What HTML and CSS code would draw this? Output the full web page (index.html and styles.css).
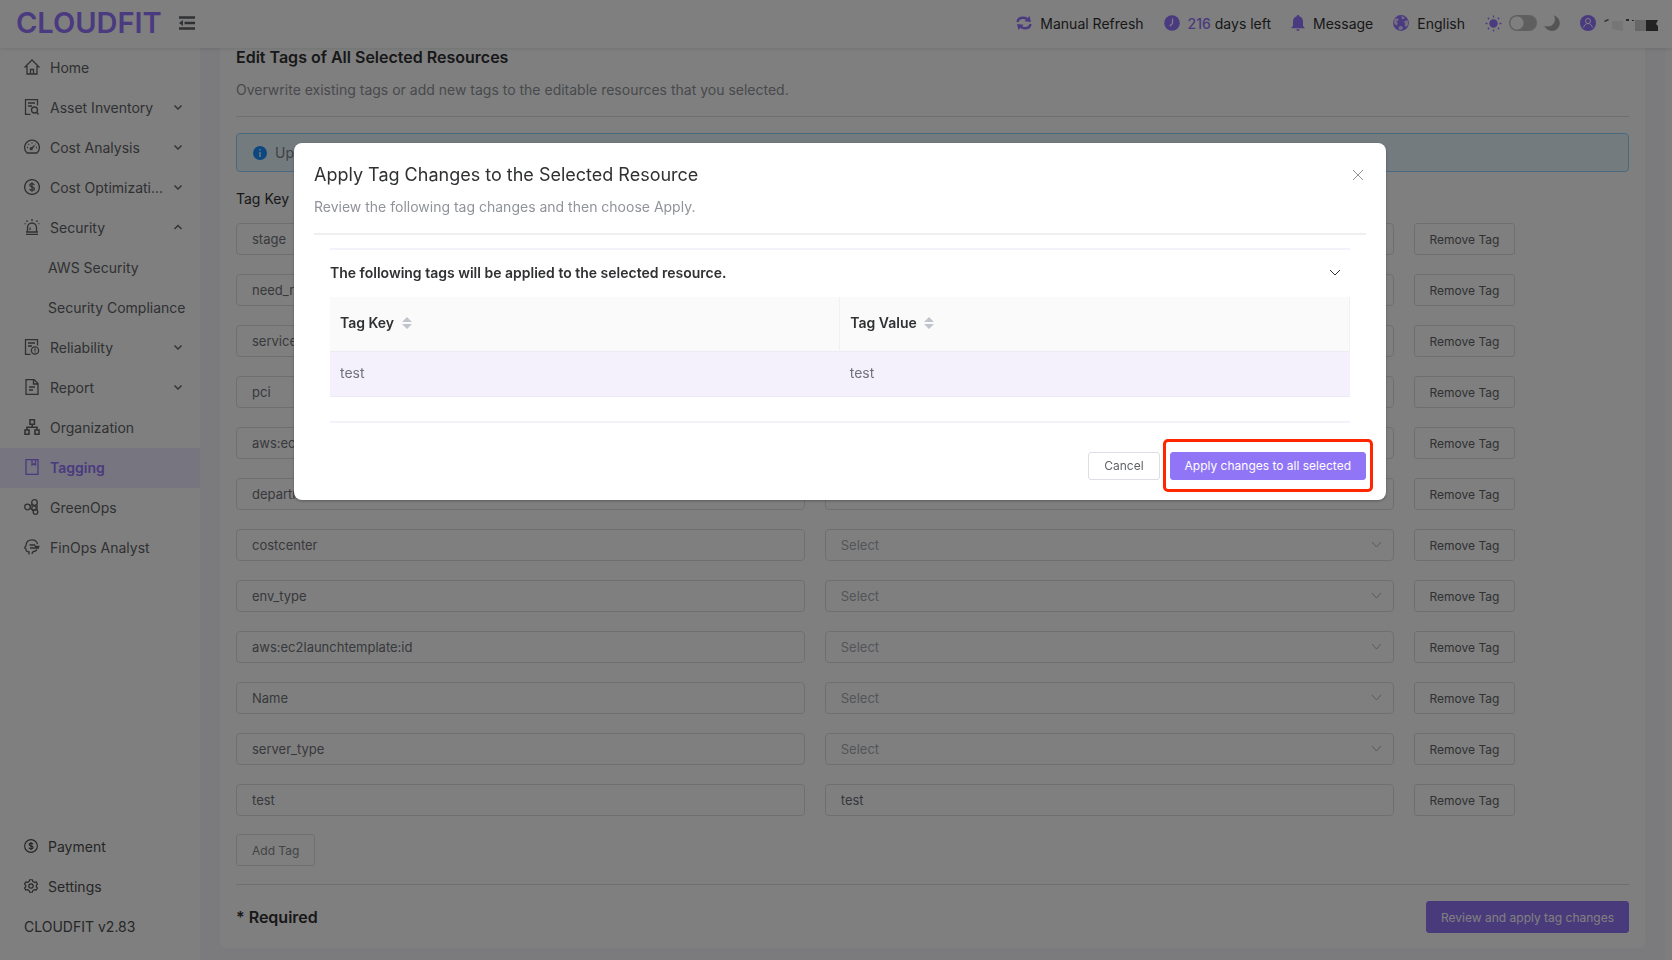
FILE: index.html
```html
<!DOCTYPE html>
<html lang="en">
<head>
    <meta charset="UTF-8">
    <title>CLOUDFIT - Tagging</title>
    <meta name="viewport" content="width=device-width, initial-scale=1.0">
    <link rel="stylesheet" href="styles.css">
</head>
<body>
    <header class="topbar">
        <a class="logo" href="#">CLOUDFIT</a>
        <button class="fold" aria-label="Collapse menu">
            <svg width="16" height="14" viewBox="0 0 16 14"><path d="M0 1.500h16M5.500 7h10.500M0 12.500h16" stroke="currentColor" stroke-width="2.400" fill="none"/><path d="M0 7l4-3v6z" fill="currentColor"/></svg>
        </button>
        <nav class="tools">
            <a href="#" class="tool">
                <svg width="16" height="16" viewBox="0 0 16 16"><path d="M1.500 7C2 4 4.500 2.800 7 2.800c1.500 0 3 .5 4 1.200M14.500 9c-.5 3-3 4.200-5.500 4.200-1.500 0-3-.5-4-1.200" fill="none" stroke="currentColor" stroke-width="2.400"/><path d="M13.500 1l1.500 6-6.500-.8zM2.500 15L1 9l6.500.8z" fill="currentColor"/></svg>
                Manual Refresh</a>
            <a href="#" class="tool">
                <svg width="16" height="16" viewBox="0 0 16 16"><circle cx="8" cy="8" r="7.800" fill="currentColor"/><path d="M8.500 3.500v5L5.800 11" fill="none" stroke="#fff" stroke-width="1.300"/></svg>
                <span><b class="days">216</b> days left</span></a>
            <a href="#" class="tool">
                <svg width="14" height="16" viewBox="0 0 14 16"><path d="M7 0c.8 0 1.200.5 1.200 1.200C10.500 1.800 12 3.700 12 6.200V11l1.600 1.600v.7H.4v-.7L2 11V6.200c0-2.500 1.500-4.400 3.800-5C5.800.5 6.200 0 7 0zM5.300 14.300h3.400C8.500 15.400 7.900 16 7 16s-1.500-.6-1.700-1.700z" fill="currentColor"/></svg>
                Message</a>
            <a href="#" class="tool">
                <svg width="16" height="16" viewBox="0 0 16 16"><circle cx="8" cy="8" r="7.900" fill="currentColor"/><path d="M1.500 3.800l3.200-.6 1.200 1.900-2.300 1.500 1.200 1.700-1 2.500-2.700-2.200zM8.500 1l3.300 1.200-1 1.800-2 .2zM11 6l3.800-.7.3 4.400-1.800 2.300-1.800-1.300.5-2zM5.500 12l2-1.200 2.700 1.500-1.500 2.700-3-.5z" fill="#fff" opacity=".75"/></svg>
                English</a>
            <div class="theme">
                <svg class="sun" width="17" height="17" viewBox="0 0 17 17"><circle cx="8.500" cy="8.500" r="4.200" fill="currentColor"/><path d="M8.500.5v2M8.500 14.500v2M.5 8.500h2M14.500 8.500h2M2.800 2.800l1.400 1.400M12.800 12.800l1.400 1.400M2.800 14.200l1.400-1.400M12.800 4.200l1.400-1.400" stroke="currentColor" stroke-width="1.300"/></svg>
                <input type="checkbox" class="switch" aria-label="Dark mode">
                <svg class="moon" width="16" height="16" viewBox="0 0 16 16"><path d="M10 .3C14 2 16 5 15.800 8.500 15.500 12.800 12 16 8 16 4.500 16 1.600 14 .3 10.800 3.500 12 7 11.400 9 9.200 11.300 6.800 11.500 3.500 10 .3z" fill="currentColor"/></svg>
            </div>
            <a href="#" class="tool" aria-label="Account">
                <svg width="16" height="16" viewBox="0 0 16 16"><circle cx="8" cy="8" r="8" fill="currentColor"/><circle cx="8" cy="6" r="2.500" fill="none" stroke="#fff"/><path d="M3.600 12.500c.6-2.300 2.300-4 4.400-4s3.800 1.700 4.400 4" fill="none" stroke="#fff"/></svg>
                <svg width="54" height="16" viewBox="0 0 54 16"><path d="M0 6l4-2 1 1-4 2zM22 4h3v2h-3zM28 5h2v2h-2zM31 5h2v2h-2z" fill="#555"/><path d="M8 6h11v10L8 14z" fill="#ececec"/><path d="M19 6h12v10H19z" fill="#fff"/><path d="M31 5h11v11H31z" fill="#cfcfcf"/><path d="M42 5h12l-2 4 2 2v5H42z" fill="#444"/></svg>
            </a>
        </nav>
    </header>

    <div class="layout">
        <aside class="sidebar">
            <nav class="menu">
                <a href="#"><svg viewBox="0 0 16 16"><path d="M.5 8.500 8 1l7.500 7.500M3 7v8h10V7M6.500 15v-4.500h3V15"/></svg><span>Home</span></a>
                <a href="#"><svg viewBox="0 0 16 16"><path d="M13.500 6.500v-6h-12v15h5M4 4h7M4 7h4"/><circle cx="10.500" cy="11" r="3"/><path d="M12.500 13l2 2.500"/></svg><span>Asset Inventory</span><svg class="arrow" viewBox="0 0 8 8"><path d="M.5 2.500 4 6l3.500-3.500"/></svg></a>
                <a href="#"><svg viewBox="0 0 16 16"><path d="M3 14C1.400 12.800.6 10.800.6 8.500a7.400 7.400 0 0 1 14.800 0c0 2.300-.8 4.300-2.400 5.500zM7.500 9.500l3-3M3 8.500h1M12 8.500h1M8 3.500v1M4.500 5l.7.700M11.500 5l-.3.300"/><circle cx="7.200" cy="9.700" r="1"/></svg><span>Cost Analysis</span><svg class="arrow" viewBox="0 0 8 8"><path d="M.5 2.500 4 6l3.500-3.500"/></svg></a>
                <a href="#"><svg viewBox="0 0 16 16"><circle cx="8" cy="8" r="7.400"/><path d="M10.300 6C10 5 9.200 4.700 8 4.700S5.800 5.200 5.800 6.300C5.800 8.500 10.400 7.300 10.400 9.700c0 1-.9 1.600-2.400 1.600S5.800 10.700 5.600 9.800M8 3.300v9.400"/></svg><span>Cost Optimizati...</span><svg class="arrow" viewBox="0 0 8 8"><path d="M.5 2.500 4 6l3.500-3.500"/></svg></a>
                <a href="#"><svg viewBox="0 0 16 16"><path d="M2 15.500h12M3.500 13V8.500a4.500 4.500 0 0 1 9 0V13zM6 11V8.500M8 0v2M2.500 1.500l1 1.300M13.500 1.500l-1 1.300M.5 4.500l1 .5M15.500 4.500l-1 .5M2 13h12"/></svg><span>Security</span><svg class="arrow" viewBox="0 0 8 8"><path d="M.5 6 4 2.500 7.500 6"/></svg></a>
                <a href="#" class="sub">AWS Security</a>
                <a href="#" class="sub">Security Compliance</a>
                <a href="#"><svg viewBox="0 0 16 16"><path d="M13.500 6.500v-6h-12v15h5M4 4h7M4 7h4"/><circle cx="11" cy="11.500" r="3.600"/><path d="M11 9.500v2.300M11 12.600v1"/></svg><span>Reliability</span><svg class="arrow" viewBox="0 0 8 8"><path d="M.5 2.500 4 6l3.500-3.500"/></svg></a>
                <a href="#"><svg viewBox="0 0 16 16"><path d="M2 .6h8l4 4v10.800H2zM9.500.6V5H14M5 8h6M5 11h4"/></svg><span>Report</span><svg class="arrow" viewBox="0 0 8 8"><path d="M.5 2.500 4 6l3.500-3.500"/></svg></a>
                <a href="#"><svg class="bold" viewBox="0 0 16 16"><path d="M6 .8h4.400v4.400H6zM1 11h4v4.200H1zM11 11h4v4.200h-4zM8.200 5.200v3M3 11V8.200h10V11"/></svg><span>Organization</span></a>
                <a href="#" class="active"><svg viewBox="0 0 16 16"><path d="M2 .6h12v14.800H2zM8 .6V6l1.800-1.300L11.500 6V.6"/></svg><span>Tagging</span></a>
                <a href="#"><svg viewBox="0 0 16 16"><circle cx="3.500" cy="8" r="2.800"/><circle cx="10.500" cy="3.500" r="2.800"/><circle cx="10" cy="9" r="2.200"/><circle cx="11.500" cy="13" r="2.300"/><path d="M6 7l2.500-1.700M6 9l3.500 3M13 5.500v5.500"/></svg><span>GreenOps</span></a>
                <a href="#"><svg viewBox="0 0 16 16"><path d="M5 15.500V12.800C3 12.800 2 12.500 2 10L.6 8.700 2 6.500C2.200 3 4.500.8 8 .8c3 0 5 1.800 5.500 4.200M5.500 6h5l1 1.500h4M6 9h9M8 15c.3-2.500 1.500-3 3.500-3l1.500-1.500"/></svg><span>FinOps Analyst</span></a>
            </nav>
            <nav class="menu menu-bottom">
                <a href="#"><svg viewBox="0 0 16 16"><circle cx="8" cy="8" r="7.300"/><path d="M10.300 6C10 5 9.200 4.700 8 4.700S5.800 5.200 5.800 6.300C5.800 8.500 10.400 7.300 10.400 9.700c0 1-.9 1.600-2.400 1.600S5.800 10.700 5.600 9.800M8 3.300v9.400"/></svg><span>Payment</span></a>
                <a href="#"><svg viewBox="0 0 16 16"><path d="M6.500.8h3l.6 2 1.700 1 2.100-.5 1.500 2.500L14 7.200v1.600l1.400 1.400-1.500 2.500-2.100-.5-1.700 1-.6 2h-3l-.6-2-1.700-1-2.100.5L.6 10.200 2 8.800V7.200L.6 5.800l1.500-2.500 2.100.5 1.700-1z"/><circle cx="8" cy="8" r="2.500"/></svg><span>Settings</span></a>
                <p class="version">CLOUDFIT v2.83</p>
            </nav>
        </aside>

        <main class="content">
            <section class="card">
                <h2>Edit Tags of All Selected Resources</h2>
                <p class="desc">Overwrite existing tags or add new tags to the editable resources that you selected.</p>
                <hr>
                <div class="alert">
                    <svg width="14" height="14" viewBox="0 0 14 14"><circle cx="7" cy="7" r="7" fill="#1890ff"/><path d="M7 3v1.500M7 6v5" stroke="#e6f7ff" stroke-width="1.400"/></svg>
                    Up to 50 tags can be added to each resource.
                </div>
                <div class="row labels"><span>Tag Key</span><span>Tag Value</span></div>
                <div class="rows" id="tagRows"></div>
                <button class="btn add">Add Tag</button>
                <hr>
                <div class="card-footer">
                    <strong>* Required</strong>
                    <button class="btn primary">Review and apply tag changes</button>
                </div>
            </section>
        </main>
    </div>

    <div class="overlay">
        <div class="modal" role="dialog" aria-labelledby="modalTitle">
            <div class="modal-head">
                <h3 id="modalTitle">Apply Tag Changes to the Selected Resource</h3>
                <button class="close" aria-label="Close"><svg width="10" height="10" viewBox="0 0 10 10"><path d="M0 0l10 10M10 0 0 10" stroke="currentColor" fill="none"/></svg></button>
            </div>
            <p class="modal-desc">Review the following tag changes and then choose Apply.</p>
            <div class="collapse">
                <button class="collapse-head">The following tags will be applied to the selected resource.
                    <svg width="12" height="8" viewBox="0 0 12 8"><path d="M1 1l5 5 5-5" stroke="currentColor" fill="none"/></svg></button>
                <table>
                    <thead>
                        <tr>
                            <th>Tag Key <svg width="10" height="12" viewBox="0 0 10 12"><path d="M0 5l5-5 5 5zM0 7l5 5 5-5z" fill="#c0c4cc"/></svg></th>
                            <th>Tag Value <svg width="10" height="12" viewBox="0 0 10 12"><path d="M0 5l5-5 5 5zM0 7l5 5 5-5z" fill="#c0c4cc"/></svg></th>
                        </tr>
                    </thead>
                    <tbody>
                        <tr><td>test</td><td>test</td></tr>
                    </tbody>
                </table>
            </div>
            <div class="modal-footer">
                <button class="btn small">Cancel</button>
                <button class="btn small primary marked">Apply changes to all selected</button>
            </div>
        </div>
    </div>

    <script>
        const tags = [
            ['stage'], ['need_ri'], ['service'], ['pci'], ['aws:ec2:fleet-id'], ['department'],
            ['costcenter'], ['env_type'], ['aws:ec2launchtemplate:id'], ['Name'], ['server_type'],
            ['test', 'test']
        ];

        document.getElementById('tagRows').innerHTML = tags.map(([key, value]) => `
            <div class="row">
                <input type="text" value="${key}" aria-label="Tag key">
                ${value
                    ? `<input type="text" value="${value}" aria-label="Tag value">`
                    : `<div class="select">
                        <select aria-label="Value of ${key}"><option>Select</option></select>
                        <svg width="11" height="8" viewBox="0 0 11 8"><path d="M1 1l4.500 5L10 1" stroke="currentColor" fill="none"/></svg>
                    </div>`}
                <button class="btn remove">Remove Tag</button>
            </div>`).join('');
    </script>
</body>
</html>
```
FILE: styles.css
```css
* {
    box-sizing: border-box;
}

body {
    margin: 0;
    min-height: 100vh;
    display: flex;
    flex-direction: column;
    background-color: #fff;
    color: #303133;
    font-family: Inter, "Noto Sans", sans-serif;
    font-size: 14px;
}

a {
    color: inherit;
    text-decoration: none;
}

button, input, select {
    font-family: inherit;
}

button {
    cursor: pointer;
}

h2, h3, p {
    margin: 0;
}

/* header */
.topbar {
    display: flex;
    align-items: center;
    height: 48px;
    padding: 0 14px 2px 16px;
    background-color: #fff;
    box-shadow: 0 1px 4px rgba(0, 21, 41, 0.12);
    position: relative;
}

.logo {
    color: #9474ff;
    font-size: 29px;
    font-weight: 600;
    line-height: 46px;
}

.fold {
    margin-left: 17px;
    padding: 0;
    border: none;
    background: none;
    color: #606266;
    display: flex;
}

.tools {
    margin-left: auto;
    display: flex;
    align-items: center;
    gap: 20px;
}

.tool {
    display: flex;
    align-items: center;
    gap: 8px;
    white-space: nowrap;
}

.tool svg:first-child, .sun, .days {
    color: #9474ff;
}

.days {
    font-weight: 500;
}

.theme {
    display: flex;
    align-items: center;
    gap: 7px;
}

.moon {
    color: #a8a8ac;
}

.switch {
    appearance: none;
    margin: 0;
    width: 28px;
    height: 16px;
    border-radius: 8px;
    background: radial-gradient(circle at 8px 8px, #fff 6px, #bfbfbf 7px);
}

/* sidebar */
.layout {
    flex: 1;
    display: flex;
    background-color: #f6f6fb;
}

.sidebar {
    width: 200px;
    flex-shrink: 0;
    display: flex;
    flex-direction: column;
    background-color: #fff;
}

.menu a, .version {
    display: flex;
    align-items: center;
    gap: 10px;
    height: 40px;
    padding: 0 18px 2px 24px;
    color: #606266;
    white-space: nowrap;
}

.menu svg {
    width: 16px;
    height: 16px;
    fill: none;
    stroke: currentColor;
    stroke-width: 1.3;
}

.menu .bold {
    stroke-width: 1.6;
}

.menu .arrow {
    width: 8px;
    height: 8px;
    margin-left: auto;
    stroke-width: 1.4;
}

.menu .sub {
    padding-left: 48px;
}

.menu .active {
    background-color: #eeeaff;
    color: #9474ff;
    font-weight: 600;
}

.menu-bottom {
    margin-top: auto;
    padding-bottom: 13px;
}

.menu-bottom a, .version {
    color: #4c4d50;
}

.menu-bottom svg {
    width: 14px;
    height: 14px;
}

/* content */
.content {
    flex: 1;
    padding: 0 7px 10px 20px;
    background: linear-gradient(#fcfcfc, #fcfcfc) right / 7px 100% no-repeat;
}

.card {
    margin-right: 20px;
    padding: 0 16px 15px;
    background-color: #fff;
    border-radius: 0 0 6px 6px;
}

.card h2 {
    font-size: 16px;
    font-weight: 600;
    line-height: 18px;
}

.desc {
    margin-top: 14px;
    line-height: 20px;
    color: #909399;
}

hr {
    margin: 16px 0;
    border: none;
    border-top: 1px solid #dcdfe6;
}

.alert {
    display: flex;
    align-items: center;
    gap: 8px;
    height: 39px;
    padding: 0 16px;
    border: 1px solid #91d5ff;
    border-radius: 4px;
    background-color: #e6f7ff;
    color: #808288;
}

.row {
    display: grid;
    grid-template-columns: repeat(24, 1fr);
    column-gap: 20px;
}

.row > * {
    grid-column: span 10;
}

.labels {
    margin: 17px 0 14px;
    line-height: 20px;
}

.rows {
    display: grid;
    row-gap: 19px;
}

.row input, .row select {
    width: 100%;
    height: 32px;
    padding: 0 15px;
    border: 1px solid #dcdfe6;
    border-radius: 4px;
    background-color: #fff;
    color: #707278;
    font-size: 13px;
}

.row select {
    appearance: none;
    color: #a8abb2;
}

.select {
    position: relative;
}

.select svg {
    position: absolute;
    right: 12px;
    top: 12px;
    color: #b0b3ba;
}

.btn {
    height: 32px;
    padding: 0 15px;
    border: 1px solid #dcdfe6;
    border-radius: 3px;
    background-color: #fff;
    color: #606266;
    font-size: 12px;
    white-space: nowrap;
}

.btn.remove {
    grid-column: span 4;
    justify-self: start;
}

.btn.add {
    display: block;
    margin-top: 18px;
    color: #85878c;
}

.btn.add + hr {
    margin: 18px 0 16px;
}

.btn.primary {
    border-color: #9175f7;
    background-color: #9175f7;
    color: #fff;
}

.card-footer {
    display: flex;
    align-items: center;
    justify-content: space-between;
}

.card-footer strong {
    font-size: 16px;
    font-weight: 600;
}

/* dialog */
.overlay {
    position: fixed;
    inset: 0;
    display: flex;
    justify-content: center;
    align-items: flex-start;
    padding: 143px 0 0 8px;
    background-color: rgba(0, 0, 0, 0.5);
}

.modal {
    width: min(1092px, 90%);
    padding: 20px;
    border-radius: 8px;
    background-color: #fff;
    box-shadow: 0 1px 3px rgba(0, 0, 0, 0.3);
}

.modal-head {
    display: flex;
    align-items: center;
    justify-content: space-between;
}

.modal h3 {
    font-size: 18px;
    font-weight: 400;
    line-height: 24px;
}

.close {
    padding: 0 3px;
    border: none;
    background: none;
    color: #909399;
    display: flex;
}

.modal-desc {
    padding: 10px 0 16px;
    border-bottom: 2px solid #efeff2;
    line-height: 20px;
    color: #909399;
}

.collapse {
    margin: 13px 16px 0;
    padding-bottom: 24px;
    border-top: 2px solid #f3f2fb;
    border-bottom: 2px solid #f3f2fb;
}

.collapse-head {
    display: flex;
    align-items: center;
    justify-content: space-between;
    width: 100%;
    height: 47px;
    padding: 0 9px 2px 0;
    border: none;
    background: none;
    color: #303133;
    font-size: 14px;
    font-weight: 600;
}

table {
    width: 100%;
    table-layout: fixed;
    border-collapse: collapse;
    text-align: left;
}

th, td {
    padding: 0 10px 2px;
}

th {
    height: 54px;
    border-right: 1px solid #f0f0f5;
    background-color: #fafafa;
    font-weight: 600;
}

th svg {
    margin-left: 4px;
    vertical-align: -1px;
}

td {
    height: 45px;
    border-top: 1px solid #ebeaf5;
    border-bottom: 1px solid #ebeaf5;
    background-color: #f4f1fd;
    color: #707278;
}

.modal-footer {
    display: flex;
    justify-content: flex-end;
    gap: 10px;
    margin-top: 29px;
}

.btn.small {
    height: 28px;
}

.btn.primary {
    padding: 0 14px;
}

.marked {
    position: relative;
}

.marked::after {
    content: "";
    position: absolute;
    inset: -14px -8px -13px;
    border: 3px solid #ff2600;
    border-radius: 5px;
}
```
